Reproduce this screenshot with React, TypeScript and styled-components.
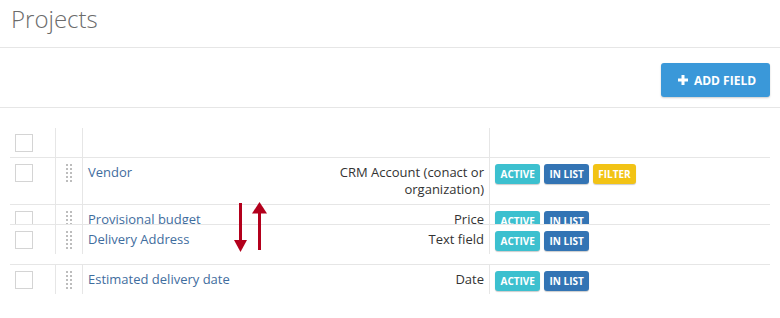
import React from "react";
import styled, { createGlobalStyle } from "styled-components";

const GlobalStyle = createGlobalStyle`
  html, body { margin: 0; padding: 0; background: #fff; }
  body {
    font-family: "Open Sans", "DejaVu Sans", sans-serif;
    font-size: 13px;
    color: #333;
  }
  * { box-sizing: border-box; }
`;

const Page = styled.div`
  width: 780px;
`;

const PageHeader = styled.header`
  height: 48px;
  border-bottom: 1px solid #e6e6e6;
  padding: 2px 11px 0;
`;

const Title = styled.h1`
  margin: 0;
  font-size: 24px;
  font-weight: 300;
  line-height: 33px;
  color: #6b6b6b;
`;

const Toolbar = styled.div`
  height: 60px;
  border-bottom: 1px solid #e6e6e6;
  display: flex;
  justify-content: flex-end;
  align-items: flex-start;
  padding: 15px 10px 0;
`;

const AddButton = styled.button`
  height: 34px;
  width: 109px;
  display: flex;
  align-items: center;
  justify-content: center;
  gap: 6px;
  padding: 0 12px 0 15px;
  background: #3a98d9;
  color: #fff;
  border: 0;
  border-radius: 3px;
  font-family: "Open Sans", sans-serif;
  font-size: 12px;
  font-weight: 700;
  text-transform: uppercase;
  white-space: nowrap;
  box-shadow: 0 1px 2px rgba(0, 0, 0, 0.2);
  cursor: pointer;
`;

const TableWrap = styled.div`
  position: relative;
  margin: 19px 10px 0;
`;

const Row = styled.div<{ $header?: boolean }>`
  display: grid;
  grid-template-columns: 45px 27px 1fr 180px 281px;
  border-top: 1px solid ${(p) => (p.$header ? "transparent" : "#e6e6e6")};
  background: #fff;
  overflow: hidden;
`;

const DraggedRow = styled(Row)`
  position: absolute;
  left: 0;
  right: 0;
  top: 97px;
  z-index: 2;
`;

const Placeholder = styled.div`
  height: 30px;
  border-top: 1px solid #e6e6e6;
`;

const Cell = styled.div<{ $divider?: boolean; $align?: "left" | "right" }>`
  padding: 6px 5px;
  line-height: 17px;
  border-left: ${(p) => (p.$divider ? "1px solid #e6e6e6" : "none")};
  text-align: ${(p) => p.$align ?? "left"};
`;

const CheckCell = styled(Cell)`
  padding: 6px 5px 5px;
`;

const HandleCell = styled(Cell)`
  display: flex;
  justify-content: center;
  align-items: flex-start;
  padding: 6px 5px 5px;
`;

const BadgeCell = styled(Cell)`
  display: flex;
  align-items: flex-start;
  gap: 3.5px;
  padding: 6px 5px 3px;
`;

const Checkbox = styled.span`
  display: block;
  width: 18px;
  height: 18px;
  border: 1px solid #d4d4d4;
  background: #fff;
`;

const NameLink = styled.a`
  color: #3f6d9e;
  text-decoration: none;
`;

const TypeText = styled.span`
  color: #333;
`;

const badgeColors = {
  active: "#3cc0cf",
  inlist: "#3374b4",
  filter: "#f2c315",
};

const Badge = styled.span<{ $kind: keyof typeof badgeColors }>`
  display: inline-flex;
  align-items: center;
  height: 20px;
  padding: 0 5.5px;
  border-radius: 3px;
  background: ${(p) => badgeColors[p.$kind]};
  color: #fff;
  font-size: 10px;
  font-weight: 700;
  line-height: 1;
  text-transform: uppercase;
  box-shadow: 0 1px 1px rgba(0, 0, 0, 0.2);
  white-space: nowrap;
`;

const ArrowsOverlay = styled.svg`
  position: absolute;
  left: 220px;
  top: 73px;
  z-index: 3;
  pointer-events: none;
`;

const DragDots = () => (
  <svg width="6" height="18" viewBox="0 0 6 18" style={{ display: "block" }}>
    {[0, 4, 8, 12, 16].map((y) =>
      [0, 4].map((x) => (
        <rect key={`${x}-${y}`} x={x} y={y} width="2" height="2" fill="#bdbdbd" />
      ))
    )}
  </svg>
);

const PlusIcon = () => (
  <svg width="10" height="10" viewBox="0 0 10 10">
    <rect x="3.5" y="0" width="3" height="10" fill="#fff" />
    <rect x="0" y="3.5" width="10" height="3" fill="#fff" />
  </svg>
);

type Field = {
  name: string;
  type: string;
  badges: (keyof typeof badgeColors)[];
};

const badgeLabel: Record<keyof typeof badgeColors, string> = {
  active: "Active",
  inlist: "In list",
  filter: "Filter",
};

const FieldCells = ({ field }: { field: Field }) => (
  <>
    <CheckCell>
      <Checkbox />
    </CheckCell>
    <HandleCell $divider>
      <DragDots />
    </HandleCell>
    <Cell $divider>
      <NameLink href="#">{field.name}</NameLink>
    </Cell>
    <Cell $align="right">
      <TypeText>{field.type}</TypeText>
    </Cell>
    <BadgeCell $divider>
      {field.badges.map((b) => (
        <Badge key={b} $kind={b}>
          {badgeLabel[b]}
        </Badge>
      ))}
    </BadgeCell>
  </>
);

const vendor: Field = {
  name: "Vendor",
  type: "CRM Account (conact or organization)",
  badges: ["active", "inlist", "filter"],
};
const budget: Field = {
  name: "Provisional budget",
  type: "Price",
  badges: ["active", "inlist"],
};
const address: Field = {
  name: "Delivery Address",
  type: "Text field",
  badges: ["active", "inlist"],
};
const delivery: Field = {
  name: "Estimated delivery date",
  type: "Date",
  badges: ["active", "inlist"],
};

export default function App() {
  return (
    <Page>
      <GlobalStyle />
      <PageHeader>
        <Title>Projects</Title>
      </PageHeader>
      <Toolbar>
        <AddButton>
          <PlusIcon />
          Add field
        </AddButton>
      </Toolbar>
      <TableWrap>
        <Row $header>
          <CheckCell>
            <Checkbox />
          </CheckCell>
          <Cell $divider />
          <Cell $divider />
          <Cell />
          <Cell $divider />
        </Row>
        <Row>
          <FieldCells field={vendor} />
        </Row>
        <Row>
          <FieldCells field={budget} />
        </Row>
        <Placeholder />
        <Row>
          <FieldCells field={delivery} />
        </Row>
        <DraggedRow>
          <FieldCells field={address} />
        </DraggedRow>
        <ArrowsOverlay width="40" height="56" viewBox="0 0 40 56">
          <rect x="9" y="3" width="3" height="38" fill="#b3001c" />
          <polygon points="4,40 17,40 10.5,52" fill="#b3001c" />
          <rect x="28" y="12" width="3" height="38" fill="#b3001c" />
          <polygon points="22,13.5 37,13.5 29.5,2" fill="#b3001c" />
        </ArrowsOverlay>
      </TableWrap>
    </Page>
  );
}
